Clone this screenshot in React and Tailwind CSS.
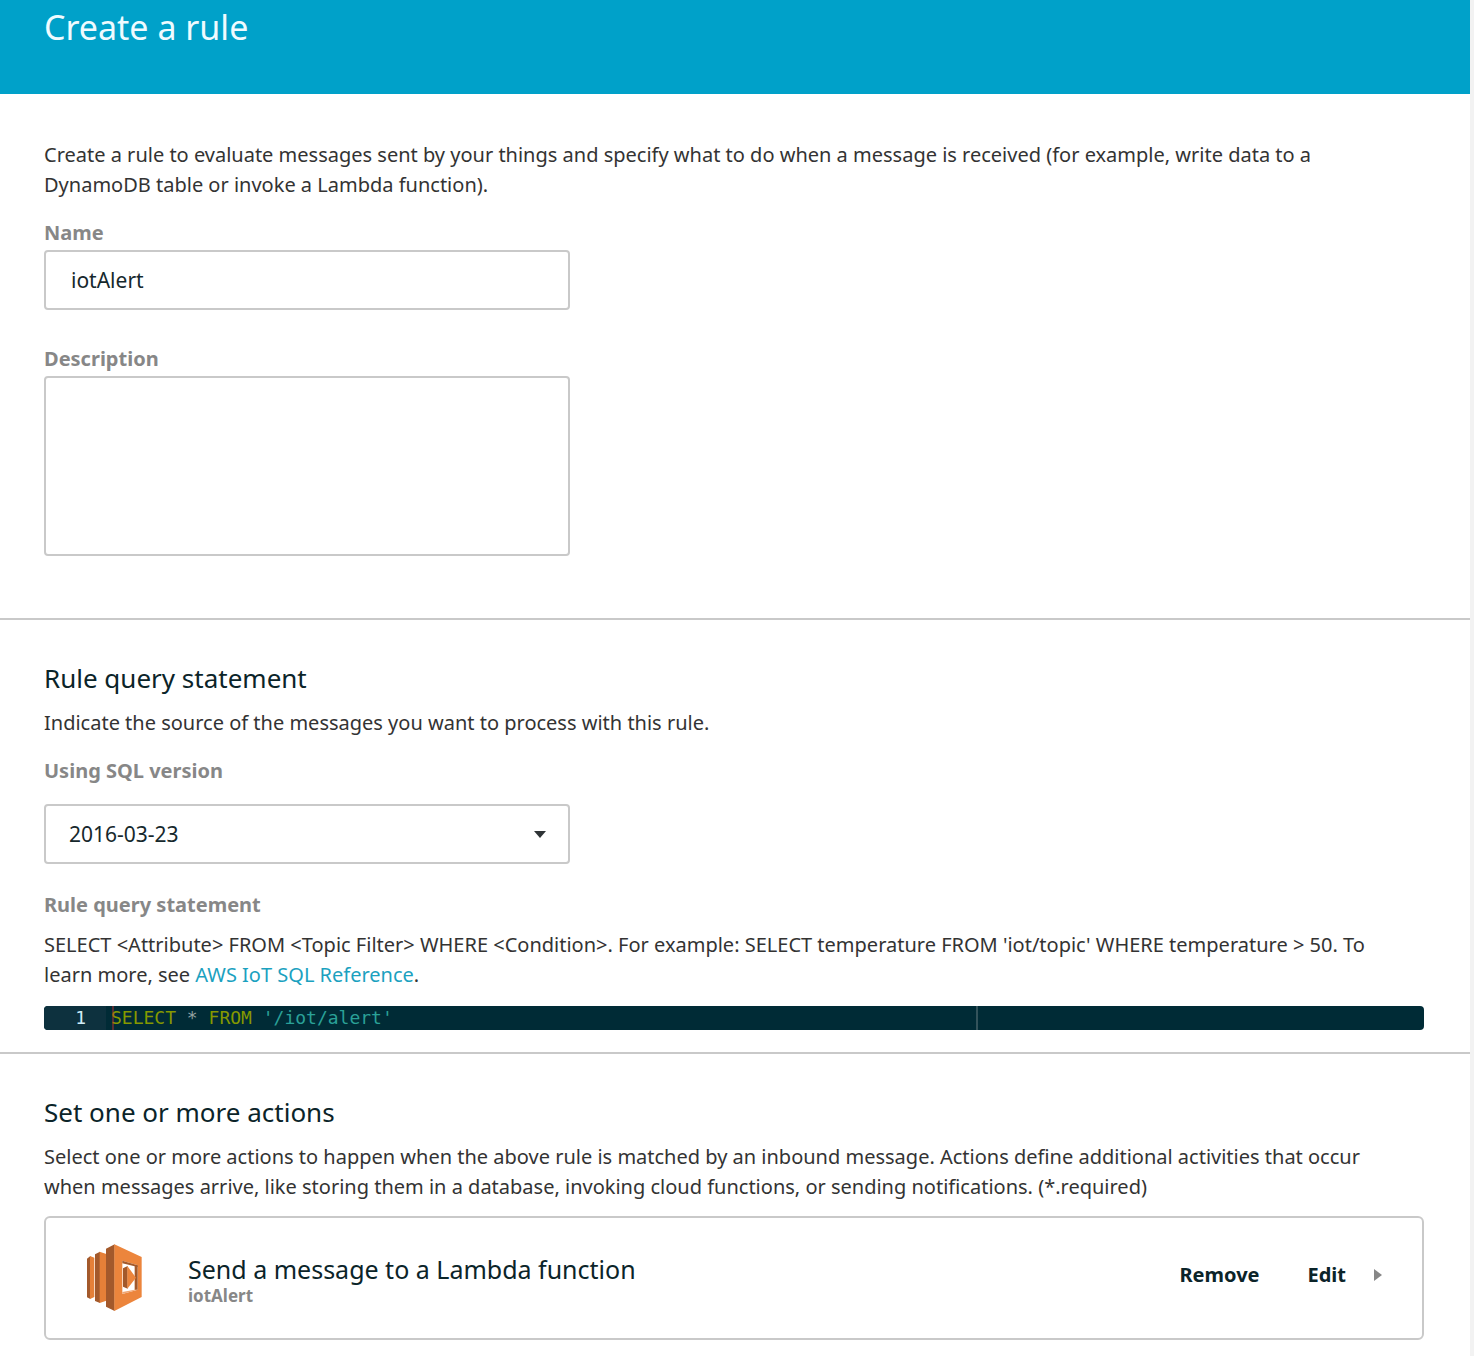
import React from "react";

const fieldBox =
  "block w-full rounded-sm border-2 border-[#c9c9c9] bg-white text-[#16282c] outline-none focus:border-[#00a1c9]";
const fieldLabel = "block text-xl leading-[30px] font-bold text-[#878787]";
const bodyText = "pr-10 text-xl leading-[30px] text-[#333]";
const heading = "text-[26px] leading-9 font-normal text-[#0b2429]";

function LambdaIcon() {
  return (
    <svg className="mt-1 h-[67px] w-[55px] shrink-0" viewBox="81 70 165 201" aria-hidden="true">
      <path fill="#a3592b" d="M81 114l10-8v129l-10-5z" />
      <path fill="#e58038" d="M90 106l13 5v118l-13 6z" />
      <path fill="#a3592b" d="M105 101l15-8v154l-15-6z" />
      <path fill="#e58038" d="M119 93l20 7v140l-20 7z" />
      <path fill="#a3592b" d="M138 84l26-13v200l-26-13z" />
      <path
        fill="#ec853c"
        fillRule="evenodd"
        d="M163 71l82 38v120l-82 42zM187 120v100l46-13v-73z"
      />
      <path fill="#a3592b" d="M187 120l46 14v5l-46-11z" />
      <path fill="#a3592b" d="M224 136l9-2v73l-9 1z" />
      <path fill="#f0a572" d="M187 214l37-7h9l-46 13z" />
      <path fill="#a3592b" d="M189 143l14-7v68l-14-6z" />
      <path fill="#ec853c" d="M202 136l26 35-26 33z" />
    </svg>
  );
}

function QueryEditor() {
  return (
    <div className="flex h-6 overflow-hidden rounded bg-[#002b36] font-['DejaVu_Sans_Mono',monospace] text-lg leading-6">
      <div className="w-[62px] shrink-0 bg-[#0d313e] pr-5 text-right text-[#d0edf7]">1</div>
      <div
        role="textbox"
        tabIndex={0}
        aria-labelledby="query-label"
        className="relative w-[872px] border-r-2 border-[#33535b] pl-[5px] whitespace-pre text-[#93a1a1]"
      >
        <span className="absolute inset-y-0 left-1.5 w-0.5 bg-[#dc322f]/40" />
        <span className="text-[#859900]">SELECT</span> * <span className="text-[#859900]">FROM</span>{" "}
        <span className="text-[#2aa198]">'/iot/alert'</span>
      </div>
    </div>
  );
}

export default function App() {
  return (
    <div className="min-h-screen border-r-4 border-[#f2f2f2] bg-white font-['Noto_Sans',sans-serif]">
      <header className="h-[94px] bg-[#00a1c9] px-11 pt-[3px]">
        <h1 className="text-[34px] leading-12 font-normal text-[#effbff]">Create a rule</h1>
      </header>

      <main>
        <section className="border-b-2 border-[#c9c9c9] pt-[46px] pr-[46px] pb-[62px] pl-11">
          <p className={bodyText}>
            Create a rule to evaluate messages sent by your things and specify what to do when a
            message is received (for example, write data to a DynamoDB table or invoke a Lambda
            function).
          </p>
          <div className="mt-[18px] max-w-[526px]">
            <label htmlFor="name" className={fieldLabel}>
              Name
            </label>
            <input
              id="name"
              type="text"
              defaultValue="iotAlert"
              className={`${fieldBox} mt-0.5 h-15 px-[25px] text-[21px]`}
            />
          </div>
          <div className="mt-[34px] max-w-[526px]">
            <label htmlFor="description" className={fieldLabel}>
              Description
            </label>
            <textarea
              id="description"
              className={`${fieldBox} mt-0.5 h-[180px] resize-none px-[25px] py-3 text-[21px]`}
            />
          </div>
        </section>

        <section className="border-b-2 border-[#c9c9c9] pt-10 pr-[46px] pb-[22px] pl-11">
          <h2 className={heading}>Rule query statement</h2>
          <p className={`${bodyText} mt-3`}>
            Indicate the source of the messages you want to process with this rule.
          </p>
          <div className="mt-[18px] max-w-[526px]">
            <label htmlFor="sql-version" className={fieldLabel}>
              Using SQL version
            </label>
            <div className="relative mt-[18px]">
              <select
                id="sql-version"
                defaultValue="2016-03-23"
                className={`${fieldBox} h-15 appearance-none px-[23px] pt-0.5 text-[21px]`}
              >
                <option>2016-03-23</option>
                <option>2015-10-08</option>
                <option>beta</option>
              </select>
              <svg
                className="pointer-events-none absolute top-[27px] right-6 h-[7px] w-3"
                viewBox="0 0 12 7"
                aria-hidden="true"
              >
                <path fill="#2f3436" d="M0 0h12L6 7z" />
              </svg>
            </div>
          </div>
          <h3 id="query-label" className={`${fieldLabel} mt-[26px]`}>
            Rule query statement
          </h3>
          <p className={`${bodyText} mt-2.5 mb-4`}>
            {"SELECT <Attribute> FROM <Topic Filter> WHERE <Condition>. For example: SELECT temperature FROM 'iot/topic' WHERE temperature > 50. To learn more, see "}
            <a href="#sql-reference" className="text-[#1ba1bf] hover:underline">
              AWS IoT SQL Reference
            </a>
            .
          </p>
          <QueryEditor />
        </section>

        <section className="pt-10 pr-[46px] pb-4 pl-11">
          <h2 className={heading}>Set one or more actions</h2>
          <p className={`${bodyText} mt-3`}>
            Select one or more actions to happen when the above rule is matched by an inbound
            message. Actions define additional activities that occur when messages arrive, like
            storing them in a database, invoking cloud functions, or sending notifications.
            (*.required)
          </p>
          <div className="mt-3.5 flex h-[124px] items-center rounded-md border-2 border-[#c9c9c9] pr-10 pb-1.5 pl-[41px]">
            <LambdaIcon />
            <div className="ml-[46px] min-w-0 flex-1 pt-2">
              <h3 className="text-[25px] leading-[34px] font-normal text-[#0b2429]">
                Send a message to a Lambda function
              </h3>
              <p className="text-[17px] leading-5 font-bold text-[#878787]">iotAlert</p>
            </div>
            <button type="button" className="text-xl font-bold text-[#0b2429]">
              Remove
            </button>
            <button type="button" className="ml-12 flex items-center text-xl font-bold text-[#0b2429]">
              Edit
              <svg className="ml-7 h-3 w-2" viewBox="0 0 8 12" aria-hidden="true">
                <path fill="#878787" d="M0 0l8 6-8 6z" />
              </svg>
            </button>
          </div>
        </section>
      </main>
    </div>
  );
}
